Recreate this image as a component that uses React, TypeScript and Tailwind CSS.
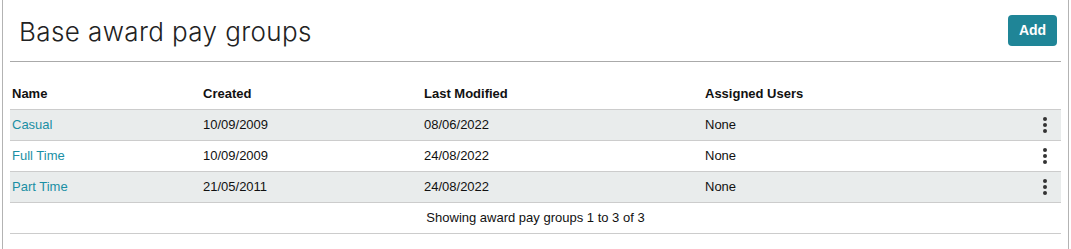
import { Fragment } from "react";

interface PayGroup {
    name: string;
    created: string;
    modified: string;
    assigned: string;
}

const groups: PayGroup[] = [
    { name: "Casual", created: "10/09/2009", modified: "08/06/2022", assigned: "None" },
    { name: "Full Time", created: "10/09/2009", modified: "24/08/2022", assigned: "None" },
    { name: "Part Time", created: "21/05/2011", modified: "24/08/2022", assigned: "None" },
];

const Kebab = () => (
    <button className="flex flex-col items-center gap-[2px] px-2 py-1">
        <span className="w-[4px] h-[4px] rounded-full bg-[#333]" />
        <span className="w-[4px] h-[4px] rounded-full bg-[#333]" />
        <span className="w-[4px] h-[4px] rounded-full bg-[#333]" />
    </button>
);

const App = () => {
    return (
        <div className="w-[1071px] h-[249px] bg-white px-[2px] font-['Liberation_Sans',Arial,sans-serif]">
            <div className="h-full border-x border-[#b3b3b3] px-[7px]">
                <div className="flex justify-between items-center h-[62px] border-b border-[#aaa] pl-[9px] pr-[4px] pt-[2px]">
                    <h1 className="text-[26px] font-light text-[#222] font-['Inter',sans-serif] tracking-[0.4px]">Base award pay groups</h1>
                    <button className="bg-[#1f8597] text-white text-[14px] font-bold rounded-[4px] w-[49px] h-[31px] mb-[2px]">Add</button>
                </div>
                <div className="mt-[17px] text-[13px] text-[#111]">
                    <div className="grid grid-cols-[191px_221px_281px_1fr_40px] items-center h-[31px] font-bold border-b border-[#ccc]">
                        <div className="pl-[2px]">Name</div>
                        <div className="pl-[2px]">Created</div>
                        <div className="pl-[2px]">Last Modified</div>
                        <div className="pl-[2px]">Assigned Users</div>
                        <div />
                    </div>
                    {groups.map((g, i) => (
                        <Fragment key={g.name}>
                            <div className={`grid grid-cols-[191px_221px_281px_1fr_40px] items-center h-[31px] border-b border-[#ccc] ${i % 2 === 0 ? "bg-[#e9ecec]" : "bg-white"}`}>
                                <a className="pl-[2px] text-[#1a8fa4]" href="#">{g.name}</a>
                                <div className="pl-[2px]">{g.created}</div>
                                <div className="pl-[2px]">{g.modified}</div>
                                <div className="pl-[2px]">{g.assigned}</div>
                                <div className="flex justify-end pr-[6px]"><Kebab /></div>
                            </div>
                        </Fragment>
                    ))}
                    <div className="h-[31px] flex items-center justify-center border-b border-[#ccc]">
                        Showing award pay groups 1 to 3 of 3
                    </div>
                </div>
            </div>
        </div>
    );
};

export default App;
